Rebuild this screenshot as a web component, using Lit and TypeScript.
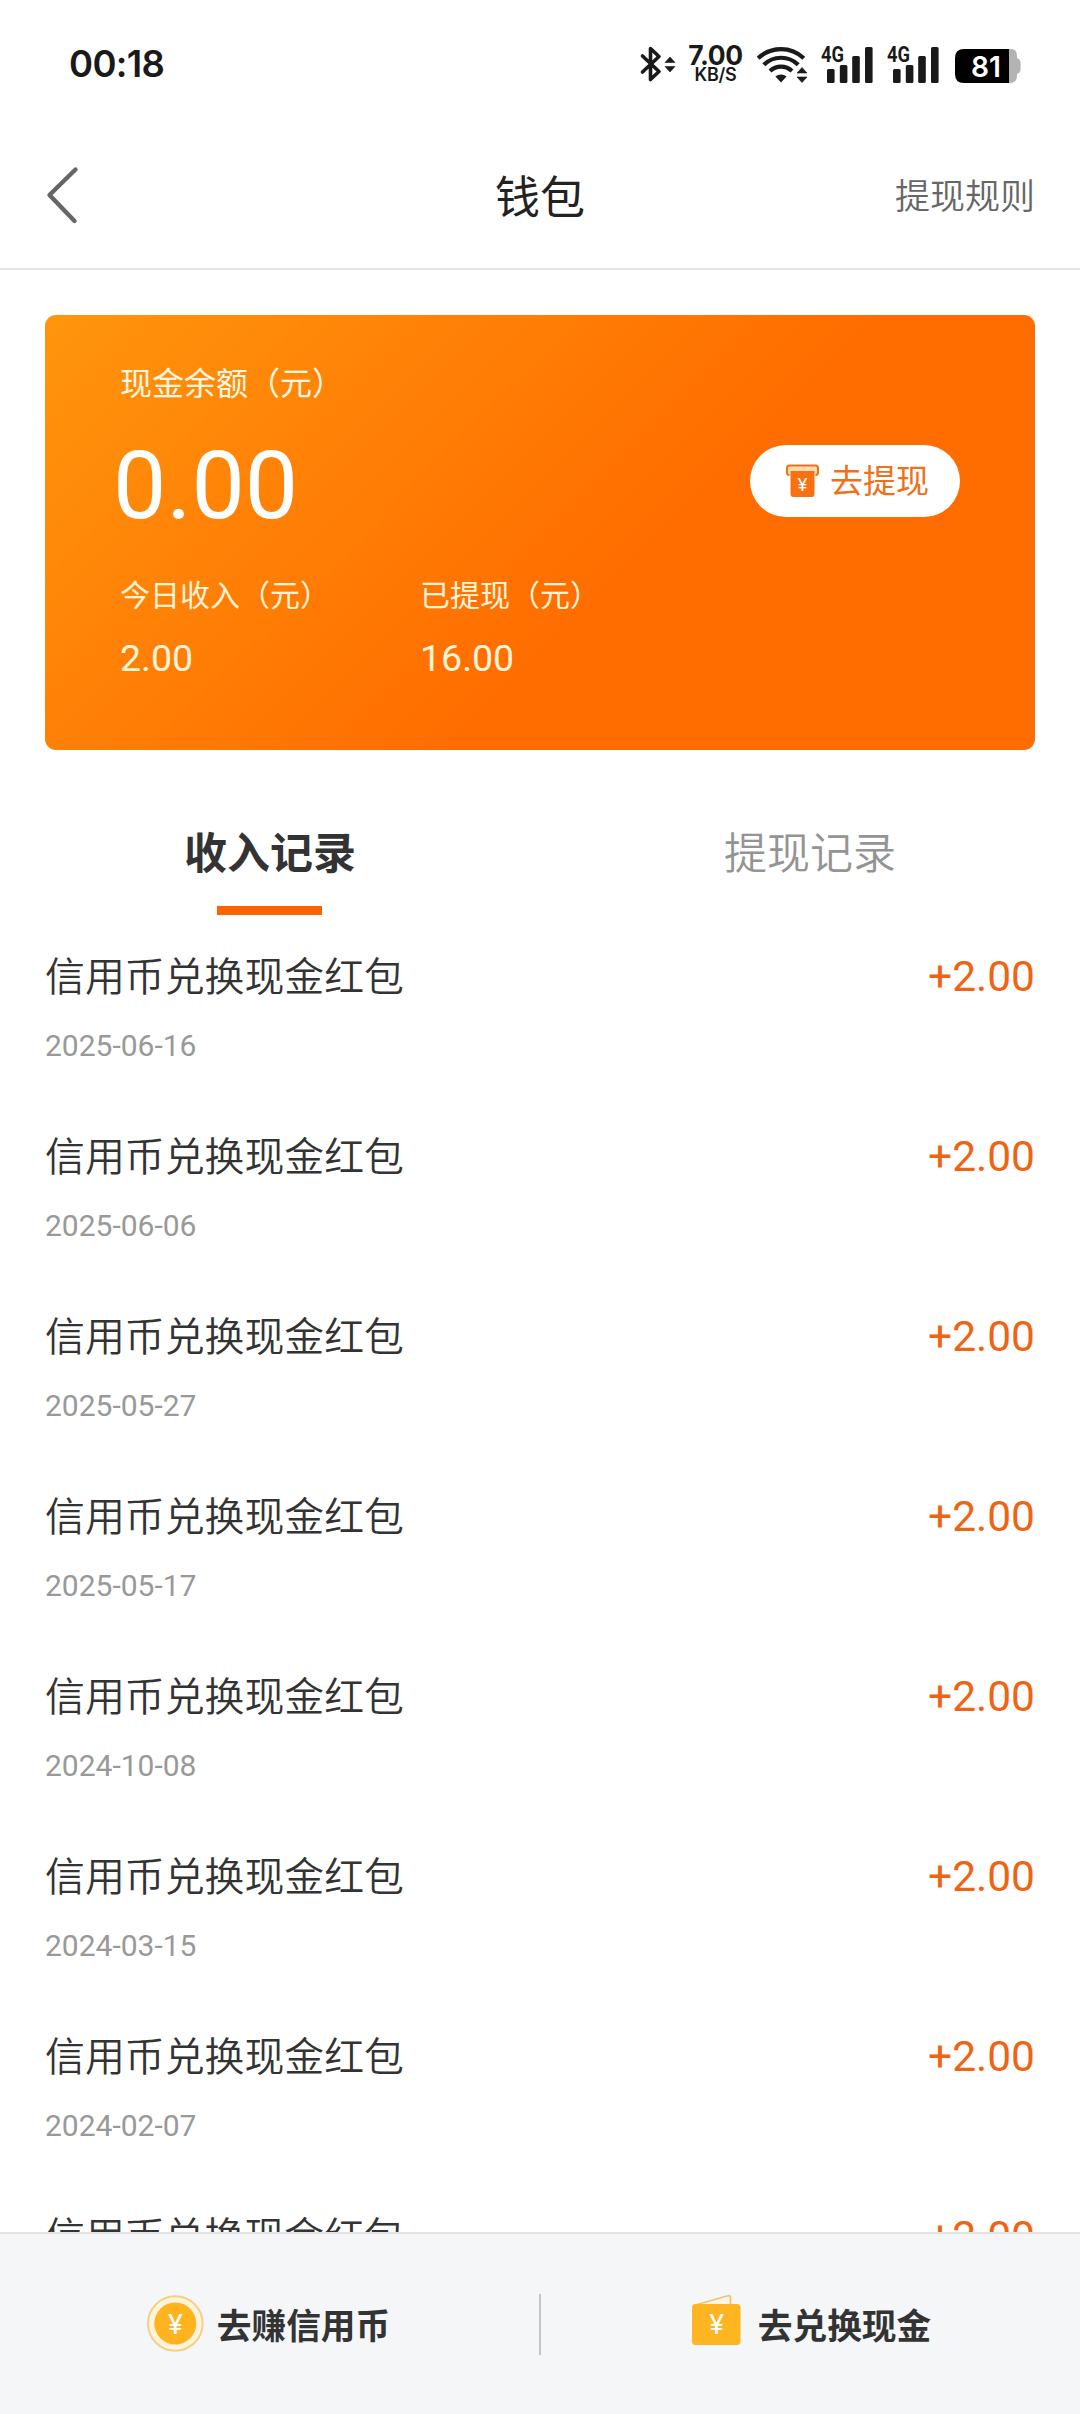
import { LitElement, html, css, svg } from "lit";
import { customElement, property } from "lit/decorators.js";

interface IncomeRecord {
  title: string;
  date: string;
  amount: string;
}

const DATES = [
  "2025-06-16",
  "2025-06-06",
  "2025-05-27",
  "2025-05-17",
  "2024-10-08",
  "2024-03-15",
  "2024-02-07",
  "2024-01-22",
];

const RECORDS: IncomeRecord[] = DATES.map((date) => ({
  title: "信用币兑换现金红包",
  date,
  amount: "+2.00",
}));

const upDown = (x: number, y: number) => svg`
  <path d="M${x} ${y + 5.5} l5 -5.5 l5 5.5 z M${x} ${y + 9.5} l5 5.5 l5 -5.5 z"
    fill="#1a1a1a" stroke="#1a1a1a" stroke-width="0.6" stroke-linejoin="round" />`;

@customElement("status-bar")
class StatusBar extends LitElement {
  static styles = css`
    :host {
      display: flex;
      align-items: center;
      justify-content: space-between;
      height: 128px;
      padding: 0 58px 0 69px;
      box-sizing: border-box;
      color: #1a1a1a;
      font-family: Inter, Roboto, sans-serif;
      flex: none;
    }
    .clock {
      font-size: 36.5px;
      font-weight: 600;
      line-height: 40px;
      letter-spacing: -0.7px;
    }
    .icons {
      display: flex;
      align-items: center;
    }
    svg {
      display: block;
      overflow: visible;
    }
    .speed {
      display: flex;
      flex-direction: column;
      align-items: center;
      width: 59px;
      margin: 0 11px 0 9px;
      font-weight: 700;
    }
    .rate {
      font-size: 26.5px;
      line-height: 20px;
      letter-spacing: -0.4px;
    }
    .unit {
      font-size: 18px;
      font-weight: 600;
      line-height: 17px;
      margin-top: 1px;
      letter-spacing: -0.3px;
    }
    .signal {
      margin-right: 12px;
    }
    .signal.last {
      margin-right: 13px;
    }
    .net {
      font: 700 21.5px Roboto, sans-serif;
      fill: #1a1a1a;
    }
    .level {
      font: 600 29px Inter, sans-serif;
      fill: #fff;
    }
  `;

  private signal(cls: string) {
    return html`<svg class=${cls} width="54" height="38" viewBox="0 0 54 38">
      <text class="net" x="0" y="17" textLength="23" lengthAdjust="spacingAndGlyphs">4G</text>
      <g fill="#1a1a1a">
        <rect x="6" y="24" width="7.6" height="14" rx="1.5" />
        <rect x="18.8" y="20" width="7.6" height="18" rx="1.5" />
        <rect x="31.2" y="11" width="7.6" height="27" rx="1.5" />
        <rect x="44" y="2" width="7.6" height="36" rx="1.5" />
      </g>
    </svg>`;
  }

  render() {
    return html`
      <span class="clock">00:18</span>
      <div class="icons">
        <svg width="36" height="38" viewBox="0 0 36 38">
          <path
            d="M1.5 11 L18 26.5 L9.5 34.5 V3.5 L18 11.5 L1.5 27"
            fill="none" stroke="#1a1a1a" stroke-width="3.6"
            stroke-linejoin="round" stroke-linecap="round" />
          ${upDown(24, 12)}
        </svg>
        <div class="speed">
          <span class="rate">7.00</span>
          <span class="unit">KB/S</span>
        </div>
        <svg width="52" height="38" viewBox="0 0 52 38">
          <g fill="none" stroke="#1a1a1a" stroke-width="4.2">
            <path d="M2.2 13.2 A33 33 0 0 1 47.8 13.2" />
            <path d="M7.8 19.8 A24.5 24.5 0 0 1 42.2 19.8" />
            <path d="M14 26 A16 16 0 0 1 36 26" />
          </g>
          <path d="M19.4 31.5 A8.5 8.5 0 0 1 30.6 31.5 L25 37.5 Z" fill="#1a1a1a" />
          ${upDown(41, 22.5)}
        </svg>
        <svg width="13" height="38"></svg>
        ${this.signal("signal")}${this.signal("signal last")}
        <svg width="68" height="38" viewBox="0 0 68 38">
          <path d="M55 4 H57 Q63 4 63 11 V13 Q66.5 14 66.5 18 V24 Q66.5 28 63 29 V31 Q63 38 56 38 H55 Z" fill="#b3b3b3" />
          <path d="M10 4 H55 V38 H10 Q1 38 1 29 V13 Q1 4 10 4 Z" fill="#000" />
          <text class="level" x="17" y="31.5" textLength="30" lengthAdjust="spacingAndGlyphs">81</text>
        </svg>
      </div>
    `;
  }
}

@customElement("record-row")
class RecordRow extends LitElement {
  @property({ attribute: false }) record!: IncomeRecord;

  static styles = css`
    :host {
      display: flex;
      justify-content: space-between;
      align-items: flex-start;
      height: 180px;
      padding: 33px 45px 0;
      box-sizing: border-box;
    }
    .title {
      font-size: 39.9px;
      line-height: 60px;
      font-weight: 350;
      color: #333;
    }
    .date {
      margin-top: 18px;
      font-size: 30px;
      line-height: 40px;
      color: #999;
    }
    .amount {
      font-size: 42.5px;
      line-height: 57px;
      color: #ee6414;
    }
  `;

  render() {
    return html`
      <div>
        <div class="title">${this.record.title}</div>
        <div class="date">${this.record.date}</div>
      </div>
      <div class="amount">${this.record.amount}</div>
    `;
  }
}

@customElement("app-root")
class AppRoot extends LitElement {
  static styles = css`
    :host {
      display: flex;
      flex-direction: column;
      width: 1080px;
      height: 2414px;
      overflow: hidden;
      background: #fff;
      font-family: Roboto, "Noto Sans CJK SC", sans-serif;
      color: #333;
    }
    svg {
      display: block;
    }
    .header {
      display: grid;
      grid-template-columns: 1fr auto 1fr;
      align-items: center;
      height: 142px;
      box-sizing: border-box;
      padding: 0 45px;
      border-bottom: 2px solid #e4e4e4;
      flex: none;
    }
    .back {
      margin-bottom: 6px;
    }
    .heading {
      font-size: 45px;
      line-height: 60px;
      margin-top: 2px;
      color: #222;
    }
    .rules {
      justify-self: end;
      font-size: 35px;
      line-height: 50px;
      font-weight: 350;
      color: #666;
    }
    .card {
      flex: none;
      height: 435px;
      box-sizing: border-box;
      margin: 45px 45px 0;
      padding: 48px 75px 0;
      border-radius: 11px;
      background: linear-gradient(135deg, #ff950d 0%, #ff6d00 59%);
      color: #fff;
    }
    .label {
      font-size: 32px;
      line-height: 42px;
      color: #fff6e0;
    }
    .balance {
      display: flex;
      align-items: center;
      justify-content: space-between;
      height: 100px;
      margin-top: 29px;
    }
    .sum {
      font-size: 95px;
      line-height: 100px;
      margin: 4px 0 0 -7px;
    }
    .withdraw {
      display: flex;
      align-items: center;
      gap: 10px;
      width: 210px;
      height: 72px;
      box-sizing: border-box;
      padding-left: 35px;
      margin-bottom: 7px;
      border-radius: 36px;
      background: #fff;
      color: #f07018;
      font-size: 33px;
      line-height: 40px;
    }
    .withdraw span {
      margin-top: 3px;
    }
    .stats {
      display: grid;
      grid-template-columns: 300px 300px;
      margin-top: 42px;
      color: #fff3d8;
    }
    .stat-label {
      font-size: 30px;
      line-height: 40px;
    }
    .stat-value {
      font-size: 37.5px;
      line-height: 50px;
      margin-top: 17px;
    }
    .tabs {
      display: grid;
      grid-template-columns: 1fr 1fr;
      padding-top: 74px;
      height: 165px;
      box-sizing: border-box;
      flex: none;
    }
    .tab {
      display: flex;
      flex-direction: column;
      align-items: center;
      font-size: 43px;
      line-height: 60px;
      font-weight: 350;
      color: #949494;
    }
    .tab.active {
      font-weight: 700;
      color: #333;
    }
    .tab.active::after {
      content: "";
      width: 105px;
      height: 9px;
      margin: 22px 1px 0 0;
      background: #ff6200;
    }
    .list {
      flex: 1;
      min-height: 0;
      overflow: hidden;
    }
    .footer {
      display: flex;
      align-items: center;
      flex: none;
      height: 182px;
      box-sizing: border-box;
      border-top: 2px solid #e3e3e3;
      background: #f4f6f8;
    }
    .action {
      flex: 1;
      display: flex;
      align-items: center;
      justify-content: center;
      gap: 12px;
      padding-right: 4px;
      font-size: 34.7px;
      line-height: 50px;
      font-weight: 700;
    }
    .action span {
      margin-top: 6px;
    }
    .rule {
      width: 2px;
      height: 61px;
      background: #c2c4c6;
    }
    .yen {
      font-family: Roboto, sans-serif;
      font-weight: 400;
      fill: #fff;
      text-anchor: middle;
    }
  `;

  render() {
    return html`
      <status-bar></status-bar>
      <div class="header">
        <svg class="back" width="40" height="60" viewBox="0 0 40 60">
          <path d="M30.5 4.5 L4.5 30 L29.5 56" fill="none" stroke="#666" stroke-width="4.4"
            stroke-linecap="round" stroke-linejoin="round" />
        </svg>
        <div class="heading">钱包</div>
        <div class="rules">提现规则</div>
      </div>

      <div class="card">
        <div class="label">现金余额（元）</div>
        <div class="balance">
          <div class="sum">0.00</div>
          <div class="withdraw">
            <svg width="35" height="36" viewBox="0 0 35 36">
              <path d="M4.5 12 Q2 12 2 9.5 V5 Q2 2.5 4.5 2.5 H30.5 Q33 2.5 33 5 V9.5 Q33 12 30.5 12"
                fill="#ffdcb4" stroke="#f07018" stroke-width="2" />
              <path d="M5.5 8 H29.5 V31 Q29.5 34 26.5 34 H8.5 Q5.5 34 5.5 31 Z" fill="#f8700f" />
              <text class="yen" x="17.5" y="27.5" font-size="19">¥</text>
            </svg>
            <span>去提现</span>
          </div>
        </div>
        <div class="stats">
          <div>
            <div class="stat-label">今日收入（元）</div>
            <div class="stat-value">2.00</div>
          </div>
          <div>
            <div class="stat-label">已提现（元）</div>
            <div class="stat-value">16.00</div>
          </div>
        </div>
      </div>

      <div class="tabs">
        <div class="tab active">收入记录</div>
        <div class="tab">提现记录</div>
      </div>

      <div class="list">
        ${RECORDS.map((r) => html`<record-row .record=${r}></record-row>`)}
      </div>

      <div class="footer">
        <div class="action">
          <svg width="60" height="60" viewBox="0 0 60 60">
            <circle cx="30.3" cy="29.5" r="27.3" fill="#fff3da" stroke="#f5cf8a" stroke-width="2" />
            <circle cx="30.3" cy="29.5" r="21" fill="#ffb31f" />
            <text class="yen" x="30.3" y="39.5" font-size="28">¥</text>
          </svg>
          <span>去赚信用币</span>
        </div>
        <div class="rule"></div>
        <div class="action">
          <svg width="60" height="60" viewBox="0 0 60 60">
            <path d="M11 10.5 L42 1.8 Q44.5 1.2 44.5 3.8 V12" fill="#fbf6ea" stroke="#f0c46c" stroke-width="1.7" />
            <rect x="6" y="10" width="48.5" height="41" rx="3.5" fill="#ffb422" />
            <text class="yen" x="30.5" y="40" font-size="28">¥</text>
          </svg>
          <span>去兑换现金</span>
        </div>
      </div>
    `;
  }
}
